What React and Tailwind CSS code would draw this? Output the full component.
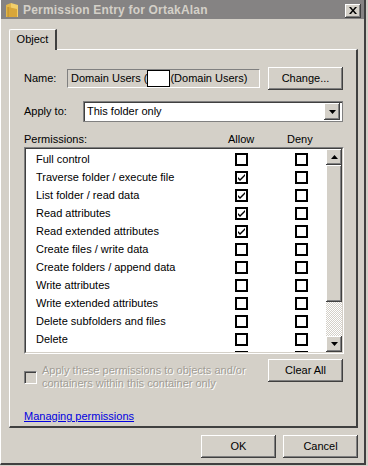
import React from "react";

const perms = [
  ["Full control", false],
  ["Traverse folder / execute file", true],
  ["List folder / read data", true],
  ["Read attributes", true],
  ["Read extended attributes", true],
  ["Create files / write data", false],
  ["Create folders / append data", false],
  ["Write attributes", false],
  ["Write extended attributes", false],
  ["Delete subfolders and files", false],
  ["Delete", false],
  ["Read permissions", false],
];

const raised =
  "bg-[#d4d0c8] shadow-[inset_-1px_-1px_#404040,inset_1px_1px_#ffffff,inset_-2px_-2px_#808080]";

function Check({ on }) {
  return (
    <div className="w-[13px] h-[13px] border-2 border-black bg-white flex items-center justify-center">
      {on && (
        <svg width="9" height="9" viewBox="0 0 9 9">
          <path d="M1 4 L3 6 L8 1 L8 3 L3 8 L1 6 Z" fill="#000" />
        </svg>
      )}
    </div>
  );
}

function Btn({ children, className = "" }) {
  return (
    <div
      className={`${raised} w-[75px] h-[23px] flex items-center justify-center text-black ${className}`}
    >
      {children}
    </div>
  );
}

function Arrow({ up }) {
  return (
    <svg width="7" height="4" viewBox="0 0 7 4">
      <path d={up ? "M3.5 0 L7 4 L0 4 Z" : "M0 0 L7 0 L3.5 4 Z"} fill="#000" />
    </svg>
  );
}

export default function App() {
  return (
    <div
      className="w-[368px] h-[466px] bg-[#d4d0c8] overflow-hidden relative text-[11px] text-black"
      style={{ fontFamily: '"Liberation Sans", Arial, sans-serif' }}
    >
      <div className="w-[366px] h-[465px] border-r-2 border-b-2 border-[#404040] border-l border-l-white flex flex-col">
        {/* Title bar */}
        <div className="h-[19px] bg-[#858383] flex items-center pl-[4px] pr-[3px]">
          <svg width="15" height="16" viewBox="0 0 15 16">
            <path d="M1 3 L6 1 L6 15 L1 15 Z" fill="#e2b64a" />
            <path d="M6 1 L13 3 L13 15 L6 15 Z" fill="#f2cf6a" />
            <path d="M3 5 L12 7 L12 15 L3 15 Z" fill="#d8a63a" />
            <path d="M3 5 L3 15" stroke="#b88a28" strokeWidth="1" />
          </svg>
          <span className="ml-[3px] font-bold text-[12px] text-[#d4d0c8] tracking-[0.2px]">
            Permission Entry for OrtakAlan
          </span>
          <div
            className={`${raised} ml-auto w-[16px] h-[14px] mt-[2px] flex items-center justify-center`}
          >
            <svg width="8" height="7" viewBox="0 0 8 7">
              <path d="M0 0 L2 0 L4 2.5 L6 0 L8 0 L5 3.5 L8 7 L6 7 L4 4.5 L2 7 L0 7 L3 3.5 Z" fill="#000" />
            </svg>
          </div>
        </div>

        {/* Body */}
        <div className="flex flex-col pl-[8px] pt-[9px]">
          {/* Tab */}
          <div className="flex">
            <div className="w-[48px] h-[21px] border-t border-l border-white rounded-tl-[2px] border-r-2 border-r-[#404040] flex items-center justify-center pb-[1px] relative top-[1px] z-10 bg-[#d4d0c8]">
              Object
            </div>
          </div>
          {/* Panel */}
          <div className="w-[349px] h-[379px] border-t border-l border-white border-r-2 border-b-2 border-r-[#404040] border-b-[#404040] flex flex-col pl-[14px]">
            {/* Name */}
            <div className="flex items-center mt-[17px] h-[23px]">
              <span className="w-[43px]">Name:</span>
              <div className="w-[193px] h-[19px] border border-[#808080] border-r-white border-b-white flex items-center pl-[3px]">
                <span>Domain Users (</span>
                <div className="w-[23px] h-[17px] bg-white border border-black" />
                <span>(Domain Users)</span>
              </div>
              <Btn className="ml-[8px]">Change...</Btn>
            </div>
            {/* Apply to */}
            <div className="flex items-center mt-[11px] h-[21px]">
              <span className="w-[59px]">Apply to:</span>
              <div className="w-[260px] h-[21px] bg-white border border-[#808080] shadow-[inset_1px_1px_#404040] flex items-center pl-[3px] pr-[2px]">
                <span>This folder only</span>
                <div className={`${raised} ml-auto w-[16px] h-[17px] flex items-center justify-center`}>
                  <Arrow />
                </div>
              </div>
            </div>
            {/* Permissions header */}
            <div className="flex mt-[10px] h-[14px] items-center">
              <span className="w-[204px]">Permissions:</span>
              <span className="w-[59px]">Allow</span>
              <span>Deny</span>
            </div>
            {/* List */}
            <div className="mt-[1px] w-[320px] h-[207px] border border-[#808080] border-r-white border-b-white">
              <div className="w-full h-full border border-[#404040] border-r-[#d4d0c8] border-b-[#d4d0c8] bg-white flex">
                <div className="flex-1 overflow-hidden pt-[1px]">
                  {perms.map(([label, allow]) => (
                    <div key={label} className="h-[18px] flex items-center">
                      <span className="w-[209px] pl-[10px]">{label}</span>
                      <Check on={allow} />
                      <div className="w-[47px]" />
                      <Check on={false} />
                    </div>
                  ))}
                </div>
                <div className="w-[16px] flex flex-col">
                  <div className={`${raised} h-[16px] flex items-center justify-center`}>
                    <Arrow up />
                  </div>
                  <div className={`${raised} h-[137px]`} />
                  <div className="flex-1 bg-[repeating-conic-gradient(#d4d0c8_0_25%,#ffffff_0_50%)] bg-[length:2px_2px]" />
                  <div className={`${raised} h-[16px] flex items-center justify-center`}>
                    <Arrow />
                  </div>
                </div>
              </div>
            </div>
            {/* Apply checkbox + Clear All */}
            <div className="flex mt-[5px]">
              <div className="flex items-start w-[244px] pt-[5px]">
                <div className="mt-[7px] w-[13px] h-[13px] border border-[#808080] border-r-white border-b-white shadow-[inset_1px_1px_#404040] shrink-0" />
                <span className="ml-[5px] leading-[13px] text-[#a19d95] [text-shadow:1px_1px_#ffffff]">
                  Apply these permissions to objects and/or
                  <br />
                  containers within this container only
                </span>
              </div>
              <Btn>Clear All</Btn>
            </div>
            <div className="mt-[18px]">
              <span className="underline text-[#0000e0]">Managing permissions</span>
            </div>
          </div>
          {/* Footer buttons */}
          <div className="flex justify-end mt-[7px] w-[349px] gap-[7px]">
            <Btn>OK</Btn>
            <Btn>Cancel</Btn>
          </div>
        </div>
      </div>
    </div>
  );
}
